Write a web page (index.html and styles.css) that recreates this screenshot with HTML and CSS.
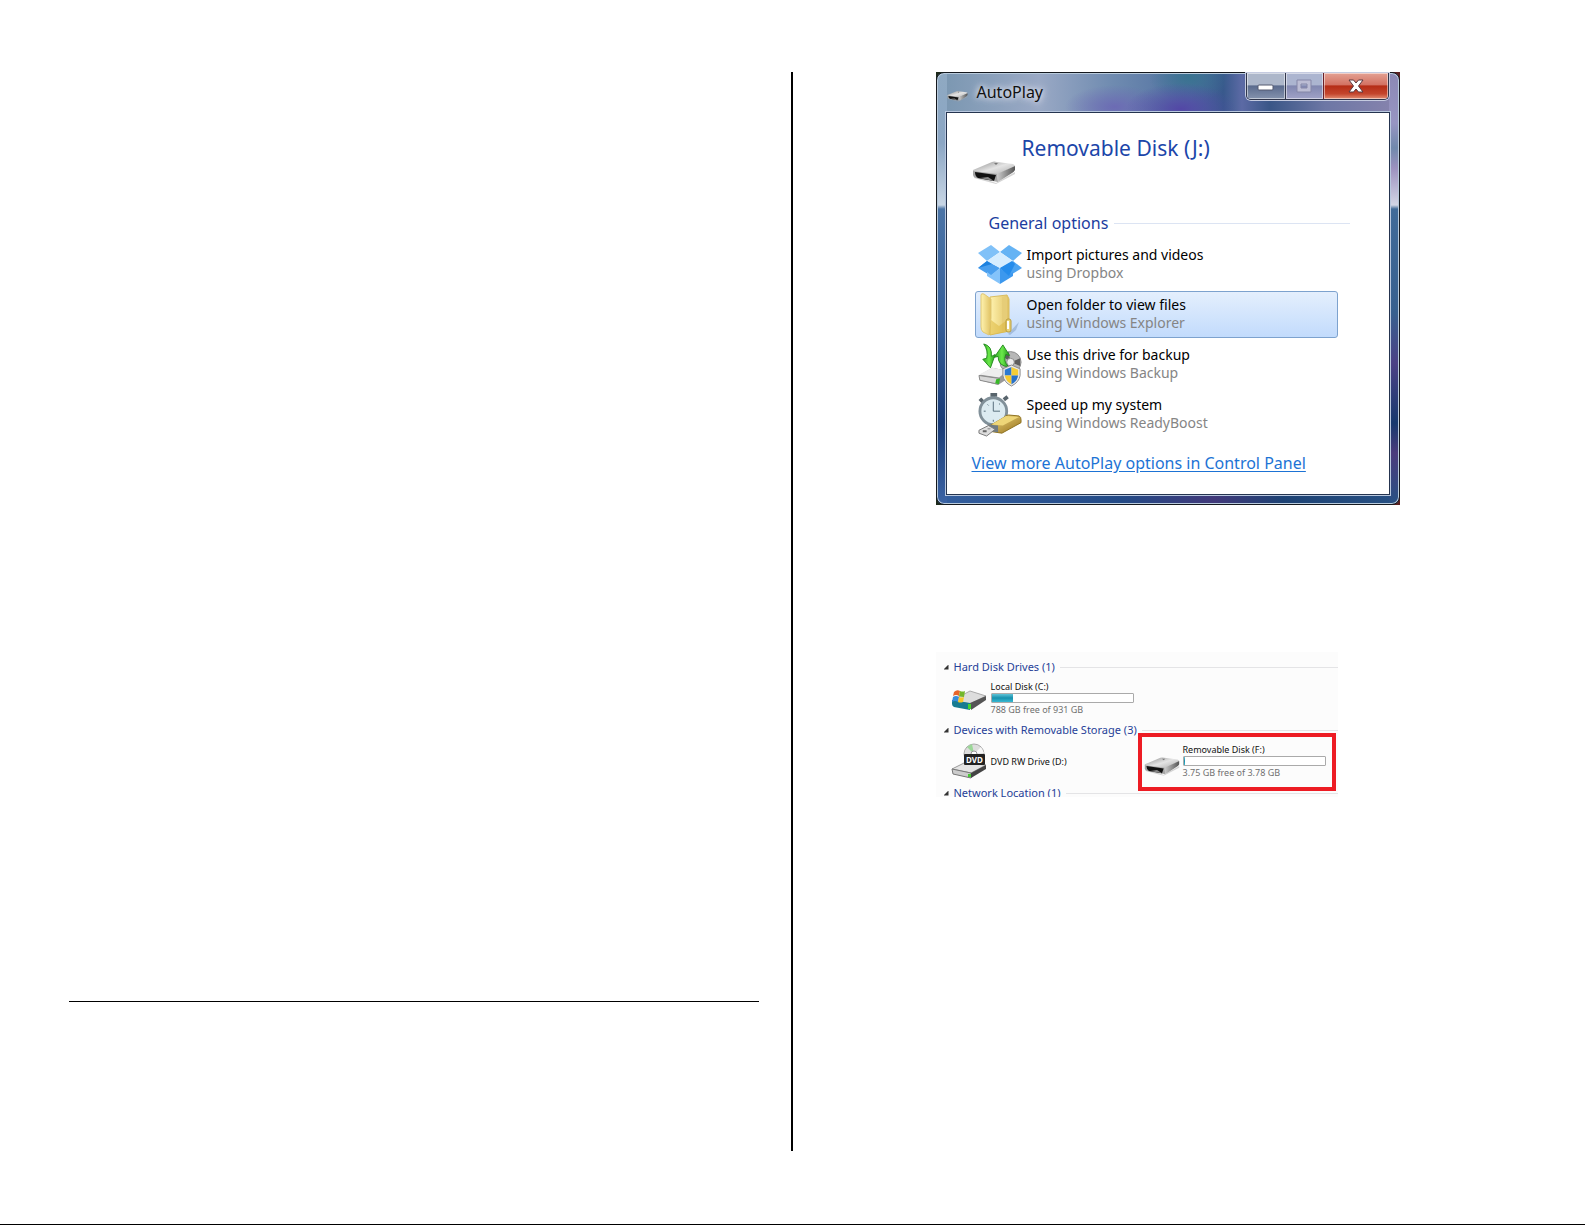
FILE: index.html
```html
<!DOCTYPE html>
<html lang="en">
<head>
<meta charset="utf-8">
<title>Removable disk guide</title>
<link rel="stylesheet" href="styles.css">
</head>
<body>
<svg width="0" height="0" class="defs" aria-hidden="true">
  <defs>
    <linearGradient id="top" x1="0" y1="0" x2="1" y2="1"><stop offset="0" stop-color="#888"/><stop offset=".5" stop-color="#e4e4e4"/><stop offset="1" stop-color="#aaa"/></linearGradient>
    <linearGradient id="side" x1="0" y1="0" x2="1" y2="0"><stop offset="0" stop-color="#ccc"/><stop offset="1" stop-color="#555"/></linearGradient>
    <linearGradient id="leaf" x1="0" y1="0" x2="1" y2="0"><stop offset="0" stop-color="#fff3b0"/><stop offset="1" stop-color="#e0c263"/></linearGradient>
    <linearGradient id="gold" x1="0" y1="0" x2="1" y2="1"><stop offset="0" stop-color="#f3dd84"/><stop offset="1" stop-color="#96701a"/></linearGradient>
    <linearGradient id="green" x1="0" y1="0" x2="1" y2="0"><stop offset="0" stop-color="#2aa520"/><stop offset=".5" stop-color="#6be94a"/><stop offset="1" stop-color="#1f9818"/></linearGradient>
    <symbol id="drive" viewBox="0 0 44 24">
      <path d="M2 15L24 23 43 12 43 14 24 24 2 18z" fill="#aaa" opacity=".5"/>
      <path d="M1 10L20 2Q22 1 25 2L41 4Q43 5 43 6L25 15 1 12z" fill="url(#top)"/>
      <path d="M25 14L43 6V10Q42 12 40 13L26 22z" fill="url(#side)"/>
      <path d="M1 11L25 14 26 22 4 18Q1 17 1 15z" fill="#a5a5a5"/>
      <path d="M3 12L24 15 22 21 6 18Q3 16 3 12z" fill="#111"/>
      <path d="M8 18L16 17 22 21z" fill="#888"/>
      <path d="M22 3L26 3 24 5z" fill="#777"/>
    </symbol>
  </defs>
</svg>
<main class="page">
  <section class="column left"><hr class="rule"></section>
  <section class="column right">
    <div class="shot">
    <article class="window">
      <header class="titlebar">
        <svg class="title-icon" viewBox="0 0 44 24"><use href="#drive"/></svg>
        <span class="title">AutoPlay</span>
        <div class="controls">
          <button class="control min" aria-label="Minimize"><svg width="20" height="12" viewBox="0 0 20 12"><rect x="2" y="5" width="15" height="5" rx="1" fill="#fff" stroke="#555a70"/></svg></button>
          <button class="control max" aria-label="Maximize" disabled><svg width="18" height="14" viewBox="0 0 18 14"><path d="M2 1H16V13H2zM6 5V9H12V5z" fill="#bcbdd4" fill-rule="evenodd" stroke="#8587a8"/></svg></button>
          <button class="control close" aria-label="Close"><svg width="18" height="14" viewBox="0 0 18 14"><path d="M2 1H6.500L9 4 11.500 1H16L11.500 7 16 13H11.500L9 10 6.500 13H2L6.500 7z" fill="#fff" stroke="#5a3940"/></svg></button>
        </div>
      </header>
      <div class="client">
        <div class="device">
          <svg class="device-icon" viewBox="0 0 44 24"><use href="#drive"/></svg>
          <h1>Removable Disk (J:)</h1>
        </div>
        <h2 class="group-title">General options</h2>
        <div class="options">
          <button class="option">
            <svg viewBox="0 0 46 42">
              <path d="M14 1L1 9 10 17 23 8z" fill="#80c1f8"/><path d="M32 1L45 9 36 17 23 8z" fill="#65b3f4"/>
              <path d="M10 17L1 24 14 32 23 24z" fill="#4a9fee"/><path d="M36 17L45 24 32 32 23 24z" fill="#4ba3f1"/>
              <path d="M10 17L23 8 36 17 23 24z" fill="#d6edff"/>
              <path d="M10 28L14 31 23 24V40L10 32z" fill="#84c3fa"/><path d="M36 28L32 31 23 24V40L36 32z" fill="#3c98ee"/>
              <path d="M1 24L10 17 15 20z" fill="#1e82df"/><path d="M23 24L35 17 38 20 32 32z" fill="#258ceb"/>
            </svg>
            <span class="label">Import pictures and videos<small>using Dropbox</small></span>
          </button>
          <button class="option selected">
            <svg viewBox="0 0 46 44">
              <path d="M31 41L42 29 39 37 33 42z" fill="#8ca6c8" opacity=".6"/>
              <path d="M13 4L30 2 32 6V38L13 42z" fill="url(#leaf)" stroke="#d9bd62"/>
              <path d="M25 4H30V38L25 39z" fill="#e6cd78"/>
              <path d="M4 2Q4 0 7 1L14 6V25L12 42 6 39Q4 37 4 34z" fill="url(#leaf)" stroke="#e0c773"/>
              <path d="M14 27L12 42 30 39V27L22 33z" fill="#dcb83f" opacity=".55"/>
              <rect x="29" y="26" width="5" height="13" rx="2" fill="#e9d478" stroke="#b99c3f"/><path d="M31 28V36" stroke="#fff" stroke-width="2"/>
            </svg>
            <span class="label">Open folder to view files<small>using Windows Explorer</small></span>
          </button>
          <button class="option">
            <svg viewBox="0 0 46 46">
              <circle cx="34" cy="20" r="11" fill="#b7b7b7" stroke="#888"/><path d="M34 20L25 13 32 9zM34 20L44 16 44 24z" fill="#5d5d5d"/><circle cx="34" cy="20" r="4" fill="#eee" stroke="#888"/>
              <path d="M1 34L15 26 30 29V38L21 44 2 39z" fill="#999"/>
              <path d="M1 33L15 26 31 29 22 36z" fill="#eee"/><path d="M1 34L22 37 21 43 2 39z" fill="#d7d7d7" stroke="#888"/>
              <path d="M19 38L23 37 22 43 18 42z" fill="#38b927"/>
              <path d="M6 1Q15 3 14 14L18 12 13 26 5 17 9 16Q11 8 6 1z" fill="url(#green)" stroke="#238a1d"/>
              <path d="M26 2L33 13 29 12Q26 19 32 25 21 24 21 14L17 15z" fill="url(#green)" stroke="#238a1d"/>
              <path d="M35 23L44 27V34Q43 41 35 45 27 41 26 34V27z" fill="#e8e8e8" stroke="#888"/>
              <path d="M35 25V34H28V28z" fill="#2d79d0"/><path d="M35 25L42 28V34H35z" fill="#f5cd34"/><path d="M28 34H35V43Q29 40 28 34z" fill="#f7ca2e"/><path d="M35 34H42Q41 40 35 43z" fill="#2871c7"/>
            </svg>
            <span class="label">Use this drive for backup<small>using Windows Backup</small></span>
          </button>
          <button class="option">
            <svg viewBox="0 0 46 46">
              <path d="M16 1V7M13 2H20M2 6L6 10M27 7L31 4" stroke="#59656d" stroke-width="4"/>
              <circle cx="16" cy="19" r="14" fill="#dcebf1" stroke="#819099" stroke-width="3"/>
              <path d="M16 9V19H23M16 28V30M6 19H8M10 12L11 13M22 12L23 11" stroke="#536a78" fill="none"/>
              <path d="M11 35L28 25Q29 23 32 23L43 24Q45 25 45 28V31L25 42 12 40z" fill="url(#gold)" stroke="#8d701e"/>
              <path d="M14 33L29 24 43 25 26 34z" fill="#eed678"/>
              <path d="M10 33L21 34V41L12 40z" fill="#6f7b82"/>
              <path d="M1 39L11 34 18 38 9 45 1 42z" fill="#ddd" stroke="#777"/><path d="M5 39H9V41H5zM10 37H13V38H10z" fill="#666"/>
            </svg>
            <span class="label">Speed up my system<small>using Windows ReadyBoost</small></span>
          </button>
        </div>
        <a class="more" href="#options">View more AutoPlay options in Control Panel</a>
      </div>
    </article>
    </div>

    <article class="explorer">
      <h3 class="section-title">Hard Disk Drives (1)</h3>
      <div class="drives">
        <div class="drive">
          <svg class="drive-icon" viewBox="0 0 38 36">
            <path d="M3 20L20 11 36 16 20 24z" fill="#ddd" stroke="#aaa"/>
            <path d="M2 20L20 23V30L4 27Q2 26 2 24z" fill="#177b91"/><path d="M20 23L36 16V20L21 30z" fill="#555"/>
            <path d="M18 24H21V29H18z" fill="#45d52f"/>
            <path d="M4 12Q7 9 10 11L9 16Q6 14 3 16z" fill="#e7642a"/><path d="M10 11Q13 12 15 11L14 17Q11 17 9 16z" fill="#74b72a"/>
            <path d="M3 17Q6 15 9 17L8 22Q5 20 2 22z" fill="#378cda"/><path d="M9 17Q11 18 14 17L13 22Q10 23 8 22z" fill="#f8c829"/>
          </svg>
          <div class="drive-text"><span>Local Disk (C:)</span><div class="bar"><i style="width:15%"></i></div><small>788 GB free of 931 GB</small></div>
        </div>
      </div>
      <h3 class="section-title">Devices with Removable Storage (3)</h3>
      <div class="drives">
        <div class="drive">
          <svg class="drive-icon" viewBox="0 0 38 36">
            <circle cx="24" cy="11" r="10" fill="#ddd" stroke="#aaa"/><path d="M24 11L17 4 22 1z" fill="#9bd798"/><path d="M24 11L31 4 34 10z" fill="#f8f8f8"/><circle cx="24" cy="11" r="3" fill="#fff" stroke="#999"/>
            <path d="M2 26L14 20 36 22 21 30z" fill="#e4e4e4" stroke="#999"/><path d="M2 26L21 30V35L3 31z" fill="#ccc" stroke="#777"/><path d="M21 30L36 22V26L21 35z" fill="#444"/><path d="M18 31H21V34H18z" fill="#47c934"/>
            <rect x="14" y="11" width="21" height="11" rx="1" fill="#222"/>
            <text x="24.500" y="20" text-anchor="middle" class="dvd">DVD</text>
          </svg>
          <div class="drive-text single">DVD RW Drive (D:)</div>
        </div>
        <div class="drive marked">
          <svg class="drive-icon" viewBox="0 0 44 24"><use href="#drive"/></svg>
          <div class="drive-text"><span>Removable Disk (F:)</span><div class="bar"><i style="width:1%"></i></div><small>3.75 GB free of 3.78 GB</small></div>
        </div>
        <div class="cut-item"></div>
      </div>
      <h3 class="section-title">Network Location (1)</h3>
    </article>
  </section>
</main>
</body>
</html>
```
FILE: styles.css
```css
* { box-sizing: border-box; }
body { margin: 0; background: #fff; font-family: "Noto Sans", sans-serif; color: #111; }
h1, h2, h3 { margin: 0; font-weight: 400; }
button { font: inherit; padding: 0; border: 0; background: none; }
small { font-size: inherit; }
svg { display: block; }
.defs { position: absolute; }
.page {
  min-height: 100vh;
  padding: 72px 69px 73px;
  border-bottom: 1px solid #000;
  display: grid;
  grid-template-columns: minmax(0, 1fr) minmax(0, 1fr);
}
.left { display: flex; flex-direction: column; justify-content: flex-end; padding: 0 32px 149px 0; border-right: 2px solid #000; }
.rule { width: 100%; height: 1px; margin: 0; border: 0; background: #000; }
.right { padding-left: 143px; }

.shot { max-width: 464px; background: linear-gradient(90deg, #1d2a1c, #221d18 60%, #5a2020); }
.window {
  padding: 0 10px 10px;
  border: 1px solid #15191f;
  border-radius: 8px;
  box-shadow: inset 0 0 0 1px #b9cbdc;
  background:
    linear-gradient(#8fa9c2 0, #8ba6c4 70px, #c8d6e5 132px, #4b74a6 136px, #345e99 250px, #183a76 350px, #3c64a5) left / 10px 100% no-repeat,
    linear-gradient(#8b88b4 0, #9795c2 50px, #7089ac 75px, #9c91bf 95px, #d2d5e5 132px, #416b99 136px, #38608f 240px, #4c4286 290px, #17396e 350px, #4b3c7d 380px, #285184) right / 10px 100% no-repeat,
    linear-gradient(90deg, #345f9f, #234a86 40%, #41397a 60%, #1d4274 75%, #285184) bottom / 100% 10px no-repeat,
    radial-gradient(55px 26px at 244px 36px, #5347a6, #5347a600),
    radial-gradient(50px 22px at 178px 34px, #6c6bb4, #6c6bb400),
    radial-gradient(40px 26px at 252px 4px, #397390, #39739000),
    linear-gradient(90deg, #7996b0, #9aa9c5 22%, #6f8bb0 38%, #4f6fa0 55%, #38598c 62%, #5c6aa5 66%, #3a5687 72%, #6d77a5 84%, #8884ae);
}
.titlebar { height: 40px; display: flex; align-items: flex-start; }
.title-icon { width: 21px; height: 12px; margin-top: 17px; }
.title { margin: 7px 0 0 9px; font-size: 16px; line-height: 24px; text-shadow: 0 0 6px #fff, 0 0 10px #dde; }
.controls { display: flex; margin-left: auto; border: 1px solid #30364b; border-top: 0; border-radius: 0 0 5px 5px; box-shadow: 0 0 0 1px #c5cbe0; overflow: hidden; }
.control { height: 26px; display: grid; place-items: center; box-shadow: inset 0 0 0 1px #ffffff80; background: linear-gradient(#adb7ca 0 45%, #5b6b8d 50%, #8593ae); }
.min { width: 38px; }
.max { width: 38px; border-left: 1px solid #30364b; background: linear-gradient(#acb5d0 0 45%, #8187b0 50%, #a0a2c7); }
.close { width: 65px; border-left: 1px solid #6b2028; background: linear-gradient(#e4a193 0, #d37263 45%, #b52d16 50%, #c4452d 80%, #e38f75); }
.client { height: 381px; padding: 22px 39px 0 25px; background: #fff; outline: 1px solid #25344f; box-shadow: 0 0 0 2px #b9c8df; }
.device { display: flex; height: 74px; }
.device-icon { width: 44px; height: 24px; margin-top: 25px; }
h1 { margin-left: 6px; font-size: 21px; line-height: 26px; color: #1c46a9; }
.group-title { display: flex; align-items: center; gap: 6px; padding-left: 17px; margin-bottom: 4px; font-size: 16px; line-height: 28px; color: #1c3da0; }
.group-title::after, .section-title::after { content: ""; flex: 1; height: 1px; background: #dce4f3; }
.options { display: grid; gap: 3px; margin: 0 12px 0 3px; }
.option { display: flex; align-items: center; height: 47px; padding: 0 1px; gap: 4px; border: 1px solid transparent; border-radius: 3px; text-align: left; color: #000; }
.option svg { width: 46px; height: 44px; }
.selected { border-color: #7da2ce; background: linear-gradient(#e4effd, #c2dbfc); }
.label { padding-bottom: 2px; font-size: 14px; line-height: 18px; }
.label small { display: block; color: #858585; }
.more { display: block; margin-top: 12px; font-size: 16px; line-height: 26px; white-space: nowrap; color: #1d73d5; text-underline-offset: 2px; }

.explorer { max-width: 402px; height: 145px; margin-top: 147px; padding: 6px 0 0 8px; overflow: hidden; background: #fcfcfc; }
.section-title { display: flex; align-items: center; height: 18px; font-size: 11px; line-height: 18px; color: #263f98; }
.section-title::before { content: ""; width: 5px; height: 5px; margin-right: 5px; background: #333; clip-path: polygon(100% 0, 100% 100%, 0 100%); }
.section-title::after { margin-left: 5px; background: #e4e4e6; }
.drives { display: grid; grid-template-columns: 194px 194px 1fr; height: 45px; padding: 4px 0 0 6px; }
.drive { position: relative; display: flex; gap: 3px; }
.drive-icon { width: 38px; height: 36px; }
.drive-text { width: 143px; font-size: 9px; line-height: 13px; white-space: nowrap; }
.drive-text span, .drive-text small { display: block; }
.drive-text small { color: #707070; }
.single { align-self: center; padding-bottom: 5px; }
.bar { height: 10px; border: 1px solid #aaa; border-radius: 1px; background: #fff; }
.bar i { display: block; height: 100%; background: linear-gradient(#5fc4d8, #1690ad 50%, #39b9d2); }
.marked .drive-icon { margin-top: 5px; width: 36px; }
.marked::after { content: ""; position: absolute; inset: -10px 2px -7px -6px; border: 4px solid #ed1c24; }
.cut-item { width: 1px; height: 6px; margin: 20px 0 0 auto; background: #777; }
.dvd { font: bold 8px "Noto Sans", sans-serif; fill: #fff; }
```
